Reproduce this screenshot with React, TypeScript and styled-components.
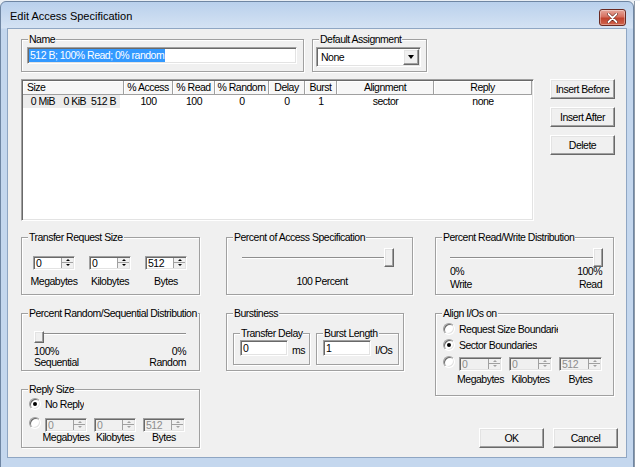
import React from "react";
import styled, { createGlobalStyle, css } from "styled-components";

const UI_FONT = `"Liberation Sans", Arial, sans-serif`;
const TITLE_FONT = `"Liberation Sans", Arial, sans-serif`;
const FACE = "#f0f0f0";

const sunken = css`
  border: 1px solid;
  border-color: #a0a0a0 #ffffff #ffffff #a0a0a0;
  box-shadow: inset 1px 1px 0 #696969, inset -1px -1px 0 #e3e3e3;
`;

const raised = css`
  border: 1px solid;
  border-color: #ffffff #696969 #696969 #ffffff;
  box-shadow: inset -1px -1px 0 #a0a0a0, inset 1px 1px 0 #e3e3e3;
`;

const GlobalStyle = createGlobalStyle`
  html, body { margin: 0; padding: 0; }
  body {
    width: 640px;
    height: 467px;
    overflow: hidden;
    background: #e9eef4;
    font-family: ${UI_FONT};
    font-size: 10.5px;
    letter-spacing: -0.5px;
    color: #000;
  }
  * { box-sizing: border-box; }
`;

const Screen = styled.div`
  display: flex;
  width: 640px;
  height: 467px;
  overflow: hidden;
  padding-top: 1px;
`;

const Window = styled.div`
  flex: 0 0 634px;
  height: 475px;
  display: flex;
  flex-direction: column;
  border: 1px solid #6f86a3;
  border-radius: 6px 6px 0 0;
  background: linear-gradient(to bottom, #b9d0ec 0px, #d4e2f3 26px, #c4d7ee 27px, #c4d7ee 100%);
  padding: 0 6px 6px 6px;
`;

const Backdrop = styled.div`
  flex: 1;
  background: #ffffff;
  border-left: 1px solid #8e9aa8;
`;

const TitleBar = styled.div`
  height: 26px;
  display: flex;
  align-items: flex-start;
`;

const Title = styled.div`
  font-family: ${TITLE_FONT};
  font-size: 11px;
  letter-spacing: 0;
  line-height: 13px;
  padding: 8px 0 0 3px;
  color: #000;
`;

const CloseButton = styled.div`
  margin: 7px 1px 0 auto;
  width: 27px;
  height: 17px;
  border: 1px solid #6b2a22;
  border-radius: 3px;
  background: linear-gradient(to bottom, #e7a89c 0%, #d66f5f 45%, #c0432f 55%, #d0644d 100%);
  box-shadow: inset 0 0 0 1px rgba(255, 255, 255, 0.35);
  display: flex;
  align-items: center;
  justify-content: center;
`;

const Client = styled.div`
  height: 430px;
  border: 1px solid #8fa6c3;
  background: ${FACE};
  padding: 4px 0 0 13px;
`;

const TopRow = styled.div`
  display: flex;
  align-items: flex-start;
  gap: 8px;
`;

const Group = styled.fieldset<{ $w: number; $h: number }>`
  flex: none;
  width: ${(p) => p.$w}px;
  height: ${(p) => p.$h}px;
  margin: 0;
  padding: 0;
  min-width: 0;
  border: 1px solid #a0a0a0;
  box-shadow: inset 1px 1px 0 #ffffff, 1px 1px 0 #ffffff;
`;

const Legend = styled.legend`
  margin-left: 6px;
  padding: 0 1px;
  line-height: 13px;
  white-space: nowrap;
  background: ${FACE};
`;

const GroupBody = styled.div<{ $pt?: number; $pl?: number }>`
  padding: ${(p) => p.$pt ?? 0}px 0 0 ${(p) => p.$pl ?? 0}px;
`;

const NameField = styled.div`
  width: 270px;
  height: 17px;
  ${sunken};
  background: #ffffff;
  display: flex;
  align-items: center;
  padding-left: 1px;
`;

const Selection = styled.span`
  background: #3399ff;
  color: #ffffff;
  line-height: 13px;
  padding: 0 1px;
  white-space: nowrap;
`;

const Combo = styled.div`
  width: 105px;
  height: 20px;
  ${sunken};
  background: #ffffff;
  display: flex;
  align-items: center;
  padding: 1px;
`;

const ComboText = styled.span`
  flex: 1;
  padding-left: 3px;
`;

const DropButton = styled.div`
  width: 16px;
  height: 16px;
  ${raised};
  background: ${FACE};
  display: flex;
  align-items: center;
  justify-content: center;
`;

const DownArrow = styled.span`
  width: 0;
  height: 0;
  border-left: 3.5px solid transparent;
  border-right: 3.5px solid transparent;
  border-top: 4px solid #000;
`;

const ListRow = styled.div`
  display: flex;
  align-items: flex-start;
  margin-top: 7px;
`;

const COLS = [101, 49, 42, 54, 36, 32, 97, 98];
const GRID = COLS.map((c) => `${c}px`).join(" ");

const ListView = styled.div`
  width: 513px;
  height: 142px;
  ${sunken};
  background: #ffffff;
  padding: 1px;
  overflow: hidden;
`;

const HeaderRow = styled.div`
  display: grid;
  grid-template-columns: ${GRID};
  height: 14px;
`;

const HeaderCell = styled.div<{ $left?: boolean }>`
  background: #f7f7f7;
  border-right: 1px solid #a0a0a0;
  border-bottom: 1px solid #a0a0a0;
  box-shadow: inset 1px 1px 0 #ffffff;
  line-height: 13px;
  text-align: ${(p) => (p.$left ? "left" : "center")};
  padding-left: ${(p) => (p.$left ? 4 : 0)}px;
  white-space: nowrap;
  overflow: hidden;
`;

const DataRow = styled.div`
  display: grid;
  grid-template-columns: ${GRID};
  height: 13px;
  line-height: 13px;
`;

const DataCell = styled.div`
  text-align: center;
  white-space: nowrap;
`;

const SizeCell = styled.div`
  display: grid;
  grid-template-columns: 32px 31px 30px;
  width: 97px;
  background: #ececec;
  padding-right: 3px;
  text-align: right;
  white-space: nowrap;
`;

const SideButtons = styled.div`
  display: flex;
  flex-direction: column;
  gap: 8px;
  margin-left: 16px;
`;

const PushButton = styled.button`
  appearance: none;
  width: 65px;
  height: 20px;
  padding: 0;
  border-radius: 0;
  ${raised};
  background: ${FACE};
  font-family: ${UI_FONT};
  font-size: 10.5px;
  letter-spacing: -0.5px;
  white-space: nowrap;
  color: #000;
`;

const Lower = styled.div`
  display: flex;
  align-items: flex-start;
  margin-top: 10px;
`;

const Column = styled.div<{ $w: number; $ml?: number }>`
  display: flex;
  flex-direction: column;
  gap: 12px;
  width: ${(p) => p.$w}px;
  margin-left: ${(p) => p.$ml ?? 0}px;
`;

const SpinRow = styled.div<{ $gap: number }>`
  display: flex;
  align-items: flex-start;
  gap: ${(p) => p.$gap}px;
`;

const SpinColumn = styled.div<{ $w: number }>`
  display: flex;
  flex-direction: column;
  align-items: center;
  width: ${(p) => p.$w}px;
`;

const SpinBox = styled.div<{ $w: number; $disabled?: boolean }>`
  display: flex;
  width: ${(p) => p.$w}px;
  height: 14px;
  ${sunken};
  background: ${(p) => (p.$disabled ? FACE : "#ffffff")};
  padding: 1px;
`;

const SpinValue = styled.span<{ $disabled?: boolean }>`
  flex: 1;
  padding-left: 1px;
  line-height: 10px;
  color: ${(p) => (p.$disabled ? "#8d8d8d" : "#000")};
`;

const UpDown = styled.div`
  display: flex;
  flex-direction: column;
  width: 12px;
  border-left: 1px solid #a0a0a0;
`;

const UpDownButton = styled.div<{ $down?: boolean; $disabled?: boolean }>`
  flex: 1;
  display: flex;
  align-items: center;
  justify-content: center;
  background: ${FACE};
  border-bottom: 1px solid ${(p) => (p.$down ? "transparent" : "#a0a0a0")};

  &::after {
    content: "";
    width: 0;
    height: 0;
    border-left: 2px solid transparent;
    border-right: 2px solid transparent;
    ${(p) =>
      p.$down
        ? `border-top: 2px solid ${p.$disabled ? "#a0a0a0" : "#000"};`
        : `border-bottom: 2px solid ${p.$disabled ? "#a0a0a0" : "#000"};`}
  }
`;

const SpinCaption = styled.div<{ $mt: number }>`
  margin-top: ${(p) => p.$mt}px;
  line-height: 11px;
  white-space: nowrap;
`;

const SliderBox = styled.div<{ $w: number; $h: number; $top?: boolean }>`
  display: flex;
  align-items: ${(p) => (p.$top ? "flex-start" : "center")};
  width: ${(p) => p.$w}px;
  height: ${(p) => p.$h}px;
`;

const Track = styled.div<{ $grow: number; $top?: boolean }>`
  flex: ${(p) => p.$grow} 1 0;
  height: 2px;
  margin-top: ${(p) => (p.$top ? 2 : 0)}px;
  border-top: 1px solid #8e8e8e;
  border-bottom: 1px solid #ffffff;
`;

const Thumb = styled.div<{ $h: number }>`
  flex: none;
  width: 10px;
  height: ${(p) => p.$h}px;
  ${raised};
  background: ${FACE};
`;

const Scale = styled.div<{ $w: number; $lh: number; $mt: number }>`
  display: flex;
  justify-content: space-between;
  width: ${(p) => p.$w}px;
  line-height: ${(p) => p.$lh}px;
  margin-top: ${(p) => p.$mt}px;
`;

const ScaleEnd = styled.div<{ $right?: boolean }>`
  text-align: ${(p) => (p.$right ? "right" : "left")};
`;

const CenterCaption = styled.div`
  width: 152px;
  padding-left: 8px;
  margin-top: 8px;
  line-height: 13px;
  text-align: center;
`;

const OptionLine = styled.div`
  display: flex;
  align-items: center;
  gap: 4px;
  height: 16px;
  white-space: nowrap;
`;

const OptionText = styled.span<{ $clip?: number }>`
  display: inline-block;
  overflow: hidden;
  ${(p) => (p.$clip ? `width: ${p.$clip}px;` : "")}
`;

const Radio = styled.span<{ $checked?: boolean }>`
  flex: none;
  display: flex;
  align-items: center;
  justify-content: center;
  width: 12px;
  height: 12px;
  border-radius: 50%;
  border: 1px solid;
  border-color: #a0a0a0 #ffffff #ffffff #a0a0a0;
  box-shadow: inset 1px 1px 0 #696969, inset -1px -1px 0 #e3e3e3;
  background: #ffffff;

  &::after {
    content: "";
    width: 4px;
    height: 4px;
    border-radius: 50%;
    background: ${(p) => (p.$checked ? "#000" : "transparent")};
  }
`;

const ChoiceRow = styled.div<{ $mt: number }>`
  display: flex;
  align-items: flex-start;
  gap: 4px;
  margin-top: ${(p) => p.$mt}px;
`;

const RowRadio = styled(Radio)`
  margin-top: -1px;
`;

const SubGroups = styled.div`
  display: flex;
  gap: 6px;
`;

const FieldRow = styled.div`
  display: flex;
  align-items: center;
  gap: 4px;
`;

const TextBox = styled.div`
  width: 48px;
  height: 16px;
  ${sunken};
  background: #ffffff;
  padding: 1px 0 0 2px;
  line-height: 13px;
`;

const Unit = styled.span`
  margin-top: 3px;
  white-space: nowrap;
`;

const DialogButtons = styled.div`
  display: flex;
  justify-content: flex-end;
  gap: 9px;
  margin: 20px -4px 0 0;
`;

type SpinProps = { value: string; w?: number; disabled?: boolean };

const Spin = ({ value, w = 42, disabled }: SpinProps) => (
  <SpinBox $w={w} $disabled={disabled}>
    <SpinValue $disabled={disabled}>{value}</SpinValue>
    <UpDown>
      <UpDownButton $disabled={disabled} />
      <UpDownButton $down $disabled={disabled} />
    </UpDown>
  </SpinBox>
);

type UnitSpinsProps = { w: number; gap: number; mt: number; disabled?: boolean };

const UnitSpins = ({ w, gap, mt, disabled }: UnitSpinsProps) => (
  <SpinRow $gap={gap}>
    {[
      ["0", "Megabytes"],
      ["0", "Kilobytes"],
      ["512", "Bytes"],
    ].map(([v, label]) => (
      <SpinColumn key={label} $w={w}>
        <Spin value={v} w={w} disabled={disabled} />
        <SpinCaption $mt={mt}>{label}</SpinCaption>
      </SpinColumn>
    ))}
  </SpinRow>
);

type SliderProps = { value: number; w: number; h: number; top?: boolean };

const Slider = ({ value, w, h, top }: SliderProps) => (
  <SliderBox $w={w} $h={h} $top={top}>
    <Track $grow={value} $top={top} />
    <Thumb $h={h} />
    <Track $grow={100 - value} $top={top} />
  </SliderBox>
);

const headers = ["% Access", "% Read", "% Random", "Delay", "Burst", "Alignment", "Reply"];
const values = ["100", "100", "0", "0", "1", "sector", "none"];

const App = () => {
  return (
    <Screen>
      <GlobalStyle />
      <Window>
        <TitleBar>
          <Title>Edit Access Specification</Title>
          <CloseButton>
            <svg width="11" height="10" viewBox="0 0 11 10">
              <path d="M1.5 1 L9.5 9 M9.5 1 L1.5 9" stroke="#5a1a12" strokeWidth="3" strokeLinecap="round" />
              <path d="M1.5 1 L9.5 9 M9.5 1 L1.5 9" stroke="#ffffff" strokeWidth="1.8" strokeLinecap="round" />
            </svg>
          </CloseButton>
        </TitleBar>
        <Client>
          <TopRow>
            <Group $w={283} $h={39}>
              <Legend>Name</Legend>
              <GroupBody $pt={1} $pl={5}>
                <NameField>
                  <Selection>512 B; 100% Read; 0% random</Selection>
                </NameField>
              </GroupBody>
            </Group>
            <Group $w={115} $h={39}>
              <Legend>Default Assignment</Legend>
              <GroupBody $pt={1} $pl={3}>
                <Combo>
                  <ComboText>None</ComboText>
                  <DropButton>
                    <DownArrow />
                  </DropButton>
                </Combo>
              </GroupBody>
            </Group>
          </TopRow>

          <ListRow>
            <ListView>
              <HeaderRow>
                <HeaderCell $left>Size</HeaderCell>
                {headers.map((h) => (
                  <HeaderCell key={h}>{h}</HeaderCell>
                ))}
              </HeaderRow>
              <DataRow>
                <div>
                  <SizeCell>
                    <span>0 MiB</span>
                    <span>0 KiB</span>
                    <span>512 B</span>
                  </SizeCell>
                </div>
                {values.map((v, i) => (
                  <DataCell key={i}>{v}</DataCell>
                ))}
              </DataRow>
            </ListView>
            <SideButtons>
              <PushButton>Insert Before</PushButton>
              <PushButton>Insert After</PushButton>
              <PushButton>Delete</PushButton>
            </SideButtons>
          </ListRow>

          <Lower>
            <Column $w={179}>
              <Group $w={179} $h={64}>
                <Legend>Transfer Request Size</Legend>
                <GroupBody $pt={12} $pl={11}>
                  <UnitSpins w={42} gap={14} mt={6} />
                </GroupBody>
              </Group>
              <Group $w={179} $h={64}>
                <Legend>Percent Random/Sequential Distribution</Legend>
                <GroupBody $pt={11} $pl={12}>
                  <Slider value={0} w={152} h={12} top />
                  <Scale $w={152} $lh={11} $mt={3}>
                    <ScaleEnd>
                      100%
                      <br />
                      Sequential
                    </ScaleEnd>
                    <ScaleEnd $right>
                      0%
                      <br />
                      Random
                    </ScaleEnd>
                  </Scale>
                </GroupBody>
              </Group>
              <Group $w={179} $h={65}>
                <Legend>Reply Size</Legend>
                <GroupBody $pl={7}>
                  <OptionLine>
                    <Radio $checked />
                    <OptionText>No Reply</OptionText>
                  </OptionLine>
                  <ChoiceRow $mt={6}>
                    <RowRadio />
                    <UnitSpins w={42} gap={7} mt={0} disabled />
                  </ChoiceRow>
                </GroupBody>
              </Group>
            </Column>

            <Column $w={187} $ml={26}>
              <Group $w={187} $h={64}>
                <Legend>Percent of Access Specification</Legend>
                <GroupBody $pt={4} $pl={15}>
                  <Slider value={100} w={152} h={19} />
                  <CenterCaption>100 Percent</CenterCaption>
                </GroupBody>
              </Group>
              <Group $w={178} $h={64}>
                <Legend>Burstiness</Legend>
                <GroupBody $pt={7} $pl={6}>
                  <SubGroups>
                    <Group $w={77} $h={38}>
                      <Legend>Transfer Delay</Legend>
                      <GroupBody $pl={6}>
                        <FieldRow>
                          <TextBox>0</TextBox>
                          <Unit>ms</Unit>
                        </FieldRow>
                      </GroupBody>
                    </Group>
                    <Group $w={83} $h={38}>
                      <Legend>Burst Length</Legend>
                      <GroupBody $pl={6}>
                        <FieldRow>
                          <TextBox>1</TextBox>
                          <Unit>I/Os</Unit>
                        </FieldRow>
                      </GroupBody>
                    </Group>
                  </SubGroups>
                </GroupBody>
              </Group>
            </Column>

            <Column $w={179} $ml={22}>
              <Group $w={179} $h={64}>
                <Legend>Percent Read/Write Distribution</Legend>
                <GroupBody $pt={4} $pl={14}>
                  <Slider value={100} w={153} h={19} />
                  <Scale $w={152} $lh={13} $mt={-2}>
                    <ScaleEnd>
                      0%
                      <br />
                      Write
                    </ScaleEnd>
                    <ScaleEnd $right>
                      100%
                      <br />
                      Read
                    </ScaleEnd>
                  </Scale>
                </GroupBody>
              </Group>
              <Group $w={179} $h={89}>
                <Legend>Align I/Os on</Legend>
                <GroupBody $pt={1} $pl={7}>
                  <OptionLine>
                    <Radio />
                    <OptionText $clip={99}>Request Size Boundaries</OptionText>
                  </OptionLine>
                  <OptionLine>
                    <Radio $checked />
                    <OptionText>Sector Boundaries</OptionText>
                  </OptionLine>
                  <ChoiceRow $mt={4}>
                    <RowRadio />
                    <UnitSpins w={43} gap={7} mt={3} disabled />
                  </ChoiceRow>
                </GroupBody>
              </Group>
              <DialogButtons>
                <PushButton>OK</PushButton>
                <PushButton>Cancel</PushButton>
              </DialogButtons>
            </Column>
          </Lower>
        </Client>
      </Window>
      <Backdrop />
    </Screen>
  );
};

export default App;
